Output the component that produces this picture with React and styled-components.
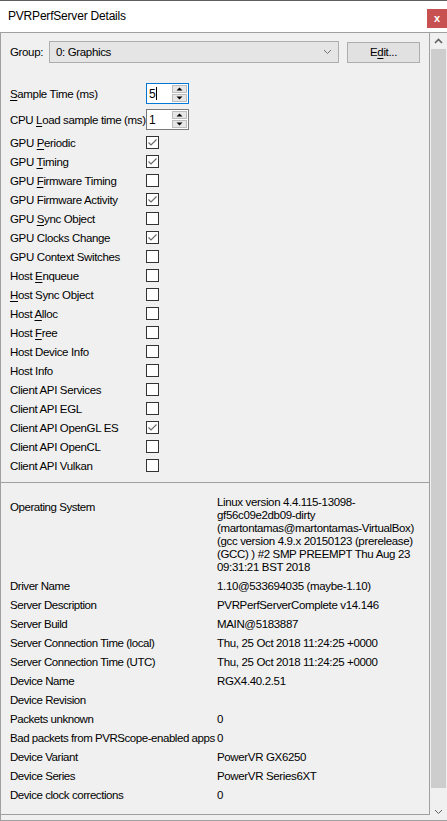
import React from 'react'
import styled, { createGlobalStyle } from 'styled-components'

const GlobalStyle = createGlobalStyle`
  html, body {
    margin: 0;
    padding: 0;
    background: #ffffff;
  }
  body {
    font-family: "Liberation Sans", Arial, sans-serif;
    font-size: 11.5px;
    letter-spacing: -0.35px;
    color: #000;
  }
`

const Window = styled.div`
  width: 447px;
  height: 821px;
  box-sizing: border-box;
  border-top: 1px solid #5f5f5f;
  display: flex;
  flex-direction: column;
  background: #fff;
  overflow: hidden;
`

const TitleBar = styled.div`
  height: 31px;
  flex: none;
  display: flex;
  align-items: center;
  justify-content: space-between;
  padding-left: 8px;
  background: #fff;
`

const Title = styled.span`
  font-size: 12px;
  letter-spacing: -0.2px;
  margin-top: -1px;
`

const CloseButton = styled.div`
  width: 20px;
  height: 19px;
  margin-top: 3px;
  background: #c75050;
  color: #fff;
  font-weight: bold;
  font-size: 11px;
  display: flex;
  align-items: center;
  justify-content: center;
  line-height: 1;
`

const Body = styled.div`
  flex: 1;
  display: flex;
  border-top: 1px solid #a0a0a0;
  border-left: 1px solid #a0a0a0;
  border-bottom: 1px solid #a0a0a0;
  background: #f0f0f0;
  min-height: 0;
`

const Scroller = styled.div`
  flex: 1;
  display: flex;
  flex-direction: column;
  padding-bottom: 5px;
`

const Content = styled.div`
  flex: 1;
  border-right: 1px solid #a0a0a0;
  border-bottom: 1px solid #a0a0a0;
  display: flex;
  flex-direction: column;
`

const TopSection = styled.div`
  padding: 8px 0 7px 9px;
  border-bottom: 1px solid #a0a0a0;
`

const GroupRow = styled.div`
  display: flex;
  align-items: center;
  height: 22px;
  margin-bottom: 20px;
`

const GroupLabel = styled.span`
  width: 39px;
`

const Combo = styled.div`
  width: 290px;
  height: 22px;
  box-sizing: border-box;
  border: 1px solid #adadad;
  background: #e5e5e5;
  display: flex;
  align-items: center;
  justify-content: space-between;
  padding: 0 6px 0 6px;
`

const Button = styled.div`
  margin-left: 8px;
  width: 73px;
  height: 21px;
  box-sizing: border-box;
  border: 1px solid #adadad;
  background: #e1e1e1;
  display: flex;
  align-items: center;
  justify-content: center;
`

const Mn = styled.span`
  text-decoration: underline;
  text-underline-offset: 2px;
`

const SpinRow = styled.div`
  display: flex;
  align-items: center;
  height: 21px;
  margin-bottom: ${p => p.$gap || 0}px;
`

const RowLabel = styled.span`
  width: 136px;
  white-space: nowrap;
`

const Spin = styled.div`
  width: 43px;
  height: 21px;
  box-sizing: border-box;
  border: 1px solid ${p => (p.$focused ? '#0078d7' : '#7a7a7a')};
  background: #fff;
  display: flex;
  align-items: stretch;
`

const SpinValue = styled.div`
  flex: 1;
  padding-left: 2px;
  display: flex;
  align-items: center;
  font-size: 12px;
`

const Caret = styled.span`
  display: inline-block;
  width: 1px;
  height: 13px;
  background: #000;
  margin-left: 1px;
`

const SpinButtons = styled.div`
  width: 15px;
  display: flex;
  flex-direction: column;
  padding: 1px 1px 1px 0;
  gap: 1px;
`

const SpinButton = styled.div`
  flex: 1;
  border: 1px solid #bcbcbc;
  background: #e6e6e6;
  display: flex;
  align-items: center;
  justify-content: center;
`

const CheckList = styled.div`
  margin-top: 3px;
  display: flex;
  flex-direction: column;
`

const CheckRow = styled.div`
  display: flex;
  align-items: center;
  height: 19px;
`

const Box = styled.div`
  width: 13px;
  height: 13px;
  box-sizing: border-box;
  border: 1px solid #333;
  background: #fff;
  display: flex;
  align-items: center;
  justify-content: center;
`

const InfoSection = styled.div`
  padding: 13px 0 0 9px;
  display: flex;
  flex-direction: column;
`

const InfoRow = styled.div`
  display: flex;
  align-items: ${p => (p.$multi ? 'flex-start' : 'center')};
  min-height: 19px;
  padding-bottom: ${p => (p.$multi ? 3 : 0)}px;
`

const InfoLabel = styled.span`
  width: 207px;
  flex: none;
  white-space: nowrap;
  letter-spacing: -0.45px;
  line-height: 19px;
  margin-top: ${p => (p.$multi ? 2 : 0)}px;
`

const InfoValue = styled.div`
  white-space: nowrap;
  line-height: ${p => (p.$multi ? 13 : 19)}px;
`

const ScrollBar = styled.div`
  width: 17px;
  flex: none;
  display: flex;
  flex-direction: column;
  background: #f0f0f0;
`

const Arrow = styled.div`
  height: 16px;
  display: flex;
  align-items: center;
  justify-content: center;
`

const Track = styled.div`
  flex: 1;
  display: flex;
  flex-direction: column;
  padding: 0 1px 16px 1px;
`

const Thumb = styled.div`
  flex: 1;
  background: #cdcdcd;
`

const Chevron = ({ up, color = '#606060', w = 9 }) => (
  <svg width={w} height="6" viewBox="0 0 9 6">
    <path
      d={up ? 'M1 5 L4.5 1.5 L8 5' : 'M1 1 L4.5 4.5 L8 1'}
      fill="none"
      stroke={color}
      strokeWidth={up ? 1.6 : 1}
    />
  </svg>
)

const Tri = ({ up }) => (
  <svg width="7" height="4" viewBox="0 0 7 4">
    <path d={up ? 'M0.5 3.5 L3.5 0.5 L6.5 3.5 Z' : 'M0.5 0.5 L3.5 3.5 L6.5 0.5 Z'} fill="#000" />
  </svg>
)

const Check = () => (
  <svg width="11" height="11" viewBox="0 0 11 11">
    <path d="M1.5 5.5 L4 8 L9.5 2.5" fill="none" stroke="#6a6a6a" strokeWidth="1.2" />
  </svg>
)

const label = (text, idx) => {
  if (idx == null) return text
  return (
    <>
      {text.slice(0, idx)}
      <Mn>{text[idx]}</Mn>
      {text.slice(idx + 1)}
    </>
  )
}

const checks = [
  ['GPU Periodic', 4, true],
  ['GPU Timing', 4, true],
  ['GPU Firmware Timing', 4, false],
  ['GPU Firmware Activity', null, true],
  ['GPU Sync Object', 4, false],
  ['GPU Clocks Change', null, true],
  ['GPU Context Switches', null, false],
  ['Host Enqueue', 5, false],
  ['Host Sync Object', 0, false],
  ['Host Alloc', 5, false],
  ['Host Free', 5, false],
  ['Host Device Info', null, false],
  ['Host Info', null, false],
  ['Client API Services', null, false],
  ['Client API EGL', null, false],
  ['Client API OpenGL ES', null, true],
  ['Client API OpenCL', null, false],
  ['Client API Vulkan', null, false],
]

const osLines = [
  'Linux version 4.4.115-13098-',
  'gf56c09e2db09-dirty',
  '(martontamas@martontamas-VirtualBox)',
  '(gcc version 4.9.x 20150123 (prerelease)',
  '(GCC) ) #2 SMP PREEMPT Thu Aug 23',
  '09:31:21 BST 2018',
]

const info = [
  ['Driver Name', '1.10@533694035 (maybe-1.10)'],
  ['Server Description', 'PVRPerfServerComplete v14.146'],
  ['Server Build', 'MAIN@5183887'],
  ['Server Connection Time (local)', 'Thu, 25 Oct 2018 11:24:25 +0000'],
  ['Server Connection Time (UTC)', 'Thu, 25 Oct 2018 11:24:25 +0000'],
  ['Device Name', 'RGX4.40.2.51'],
  ['Device Revision', ''],
  ['Packets unknown', '0'],
  ['Bad packets from PVRScope-enabled apps', '0'],
  ['Device Variant', 'PowerVR GX6250'],
  ['Device Series', 'PowerVR Series6XT'],
  ['Device clock corrections', '0'],
]

const SpinBox = ({ value, focused }) => (
  <Spin $focused={focused}>
    <SpinValue>
      {value}
      {focused && <Caret />}
    </SpinValue>
    <SpinButtons>
      <SpinButton>
        <Tri up />
      </SpinButton>
      <SpinButton>
        <Tri />
      </SpinButton>
    </SpinButtons>
  </Spin>
)

const App = () => (
  <>
    <GlobalStyle />
    <Window>
      <TitleBar>
        <Title>PVRPerfServer Details</Title>
        <CloseButton>x</CloseButton>
      </TitleBar>
      <Body>
        <Scroller>
          <Content>
            <TopSection>
              <GroupRow>
                <GroupLabel>Group:</GroupLabel>
                <Combo>
                  <span>0: Graphics</span>
                  <Chevron color="#707070" />
                </Combo>
                <Button>{label('Edit...', 1)}</Button>
              </GroupRow>
              <SpinRow $gap={5}>
                <RowLabel>{label('Sample Time (ms)', 0)}</RowLabel>
                <SpinBox value="5" focused />
              </SpinRow>
              <SpinRow>
                <RowLabel>{label('CPU Load sample time (ms)', 4)}</RowLabel>
                <SpinBox value="1" />
              </SpinRow>
              <CheckList>
                {checks.map(([text, idx, on]) => (
                  <CheckRow key={text}>
                    <RowLabel>{label(text, idx)}</RowLabel>
                    <Box>{on && <Check />}</Box>
                  </CheckRow>
                ))}
              </CheckList>
            </TopSection>
            <InfoSection>
              <InfoRow $multi>
                <InfoLabel $multi>Operating System</InfoLabel>
                <InfoValue $multi>
                  {osLines.map(l => (
                    <div key={l}>{l}</div>
                  ))}
                </InfoValue>
              </InfoRow>
              {info.map(([k, v]) => (
                <InfoRow key={k}>
                  <InfoLabel>{k}</InfoLabel>
                  <InfoValue>{v}</InfoValue>
                </InfoRow>
              ))}
            </InfoSection>
          </Content>
        </Scroller>
        <ScrollBar>
          <Arrow>
            <Chevron up w={9} />
          </Arrow>
          <Track>
            <Thumb />
          </Track>
          <Arrow>
            <Chevron w={9} />
          </Arrow>
        </ScrollBar>
      </Body>
    </Window>
  </>
)

export default App
